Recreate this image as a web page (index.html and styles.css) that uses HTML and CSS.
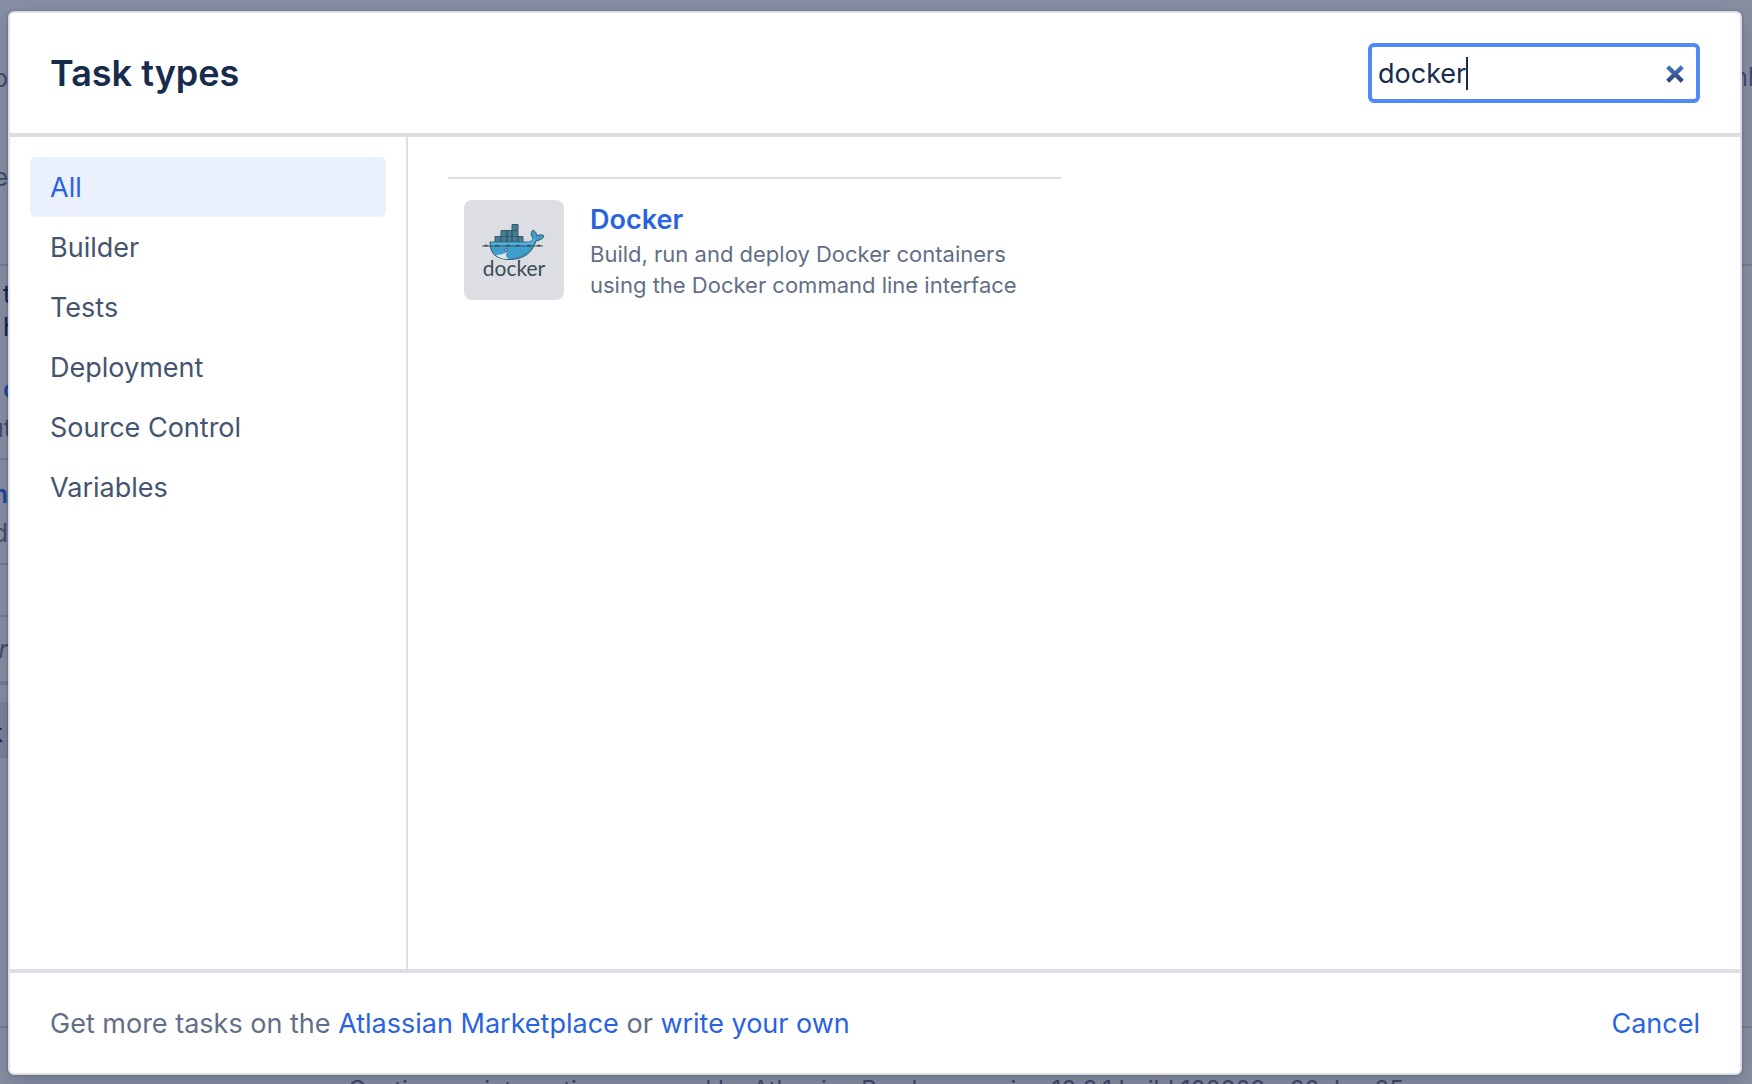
FILE: index.html
```html
<!DOCTYPE html>
<html lang="en">
<head>
<meta charset="utf-8">
<title>Task types</title>
<link rel="stylesheet" href="styles.css">
</head>
<body>
<div class="page">
  <div class="backdrop backdrop-left" aria-hidden="true">
    <span class="frag muted" style="top:62px">p</span>
    <span class="frag muted" style="top:161px">e</span>
    <span class="rule" style="top:264px"></span>
    <span class="frag dark" style="top:278px">t</span>
    <span class="frag dark" style="top:311px">h</span>
    <span class="frag blue" style="top:373px">c</span>
    <span class="frag muted cut" style="top:412px">ut</span>
    <span class="rule" style="top:458px"></span>
    <span class="frag blue-end" style="top:478px">an</span>
    <span class="frag muted" style="top:517px">d</span>
    <span class="rule" style="top:563px"></span>
    <span class="rule" style="top:615px"></span>
    <span class="frag muted italic" style="top:633px">r</span>
    <span class="rule thick" style="top:681px"></span>
    <span class="panel"></span>
    <span class="frag dark-end" style="top:717px">k</span>
    <span class="rule" style="top:1026px"></span>
  </div>
  <div class="backdrop backdrop-right" aria-hidden="true">
    <span class="frag muted edge" style="top:61px">nl</span>
    <span class="rule" style="top:264px"></span>
    <span class="rule" style="top:1026px"></span>
  </div>
  <p class="page-footer">Continuous integration powered by Atlassian Bamboo version 10.2.1 build 100209 - 20 Jan 25</p>

  <section class="dialog" role="dialog" aria-labelledby="dialog-title">
    <header class="dialog-header">
      <h1 class="dialog-title" id="dialog-title">Task types</h1>
      <div class="search">
        <input class="search-input" type="text" aria-label="Search tasks" value="docker" autofocus>
        <span class="caret"></span>
        <button class="search-clear" type="button" aria-label="Clear search">
          <svg width="20" height="20" viewBox="0 0 20 20"><defs><linearGradient id="clear-fill" gradientUnits="userSpaceOnUse" x1="0" y1="0" x2="0" y2="20"><stop offset="0" stop-color="#4c7fd0"/><stop offset="1" stop-color="#283a6b"/></linearGradient></defs><path d="M2.700 2.700L17.300 17.300M17.300 2.700L2.700 17.300" stroke="url(#clear-fill)" stroke-width="4.400"/></svg>
        </button>
      </div>
    </header>
    <div class="dialog-body">
      <nav class="categories" aria-label="Task categories">
        <a class="category selected" href="#all">All</a>
        <a class="category" href="#builder">Builder</a>
        <a class="category" href="#tests">Tests</a>
        <a class="category" href="#deployment">Deployment</a>
        <a class="category" href="#source">Source Control</a>
        <a class="category" href="#variables">Variables</a>
      </nav>
      <main class="results">
        <ul class="task-list">
          <li class="task">
            <div class="task-icon">
              <svg width="64" height="37" viewBox="0 0 64 37">
                <g fill="#3f8098" stroke="#3a5866" stroke-width="1">
                  <path d="M13 13.500h6v6h-6zM19 13.500h6v6h-6zM25 13.500h5v6h-5zM30 13.500h6v6h-6zM36 13.500h5v6h-5zM19 7.500h6v6h-6zM25 7.500h5v6h-5zM30 7.500h6v6h-6zM30 1.500h6v6h-6z"/>
                </g>
                <path d="M8 19H45C49 19 51 17 51 15C48 12 49 9 51 7C54 9 55 11 55 13C58 11 61 12 62 13C61 16 58 17 54 18C50 30 42 36.500 27 36.500C13 36 8 30 8 19Z" fill="#3f9dcb" stroke="#3a5866" stroke-width="1"/>
                <path d="M9 19.500H46C50 19 52 17 52 14L54 16C52 19 52 20 50 22H9Z" fill="#4fb1e2"/>
                <path d="M14 32C18 32 22 31 25 29C23 32 24 35 27 36C21 36 17 35 14 32Z" fill="#dce9ec"/>
                <path d="M29 35.500C40 34 47 29 51 23C46 34 38 36 29 35.500Z" fill="#3688b2"/>
                <circle cx="24" cy="27" r="1.400" fill="#dce9ec" stroke="#3a5866"/>
                <path d="M1 23L4 21.500L7 23L4 23.500ZM12 23L15 21.500L18 23L15 23.500ZM23 23L26 21.500L29 23L26 23.500ZM33 23L36 21.500L39 23L36 23.500ZM44 23L47 21.500L50 23L47 23.500ZM54 23L57 21.500L60 23L57 23.500Z" fill="#394d54"/>
                <path d="M0 23H61" stroke="#394d54" stroke-width=".8"/>
              </svg>
              <span class="logo-word">docker</span>
            </div>
            <div class="task-text">
              <h2 class="task-name"><a href="#docker">Docker</a></h2>
              <p class="task-desc">Build, run and deploy Docker containers using the Docker command line interface</p>
            </div>
          </li>
        </ul>
      </main>
    </div>
    <footer class="dialog-footer">
      <p class="more">Get more tasks on the <a href="#marketplace">Atlassian Marketplace</a> or <a href="#write">write your own</a></p>
      <button class="cancel" type="button">Cancel</button>
    </footer>
  </section>
</div>
</body>
</html>
```
FILE: styles.css
```css
* { box-sizing: border-box; }

body {
  margin: 0;
  font-family: Inter, "Liberation Sans", sans-serif;
  font-size: 27px;
  line-height: 40px;
  color: #172b4d;
}

h1, h2, p, ul { margin: 0; padding: 0; }

a { color: #2a63e0; text-decoration: none; }

.page {
  position: relative;
  height: 100vh;
  padding: 11px 10px 9px 8px;
  overflow: hidden;
  background: #898fa2;
}

/* Dimmed page showing round the dialog */
.backdrop {
  position: absolute;
  top: 0;
  bottom: 0;
  overflow: hidden;
  font-size: 25px;
  line-height: 32px;
}

.backdrop-left { left: 0; width: 8px; }
.backdrop-right { right: 0; width: 10px; }

.frag { position: absolute; right: 0; }
.muted { color: #424c6b; }
.cut { right: -4px; }
.edge { right: -2px; }
.dark { left: 3px; color: #14244f; }
.dark-end { right: 5px; color: #14244f; }
.blue { left: 3px; color: #1e479f; font-weight: 600; }
.blue-end { right: 0; color: #1e479f; font-weight: 600; }
.italic { font-style: italic; }
.rule { position: absolute; left: 0; width: 100%; height: 2px; background: #767e91; }
.thick { height: 4px; }
.panel { position: absolute; left: 0; top: 672px; width: 8px; height: 56px; background: #7c8195; top: 702px; }

.page-footer {
  position: absolute;
  top: 1076px;
  left: 0;
  right: 0;
  font-size: 24px;
  line-height: 28px;
  text-align: center;
  white-space: nowrap;
  color: #3e4866;
}

.dialog {
  position: relative;
  display: flex;
  flex-direction: column;
  height: 100%;
  border: 2px solid #dddee4;
  border-radius: 6px;
  background: #fff;
  box-shadow: 0 8px 20px rgba(9, 30, 66, .2), 0 0 2px rgba(9, 30, 66, .5);
}

.dialog-header {
  display: flex;
  align-items: center;
  justify-content: space-between;
  padding: 30px 40px;
  border-bottom: 4px solid #dddee4;
}

.dialog-title {
  font-size: 36px;
  line-height: 48px;
  font-weight: 600;
}

.search {
  position: relative;
  display: flex;
  width: 332px;
  height: 60px;
}

.search-input {
  width: 100%;
  padding: 2px 60px 0 6px;
  border: 4px solid #4f8af5;
  border-radius: 6px;
  outline: 0;
  background: #fff;
  font: inherit;
  color: #172b4d;
  caret-color: transparent;
}

.caret {
  position: absolute;
  top: 14px;
  left: 98px;
  width: 2px;
  height: 33px;
  background: #172b4d;
}

.search-clear {
  position: absolute;
  top: 21px;
  right: 15px;
  display: flex;
  padding: 0;
  border: 0;
  background: none;
}

.dialog-body { display: flex; flex: 1; min-height: 0; }

.categories {
  display: flex;
  flex-direction: column;
  flex: 0 0 398px;
  padding: 20px;
  border-right: 2px solid #dddee4;
}

.category {
  padding: 11px 20px 9px;
  border-radius: 6px;
  color: #44546f;
}

.category.selected { background: #eaf1fd; color: #2a63e0; }

.results { flex: 1; padding: 40px; }

.task-list { width: 613px; list-style: none; }

.task {
  display: flex;
  gap: 26px;
  padding: 21px 16px;
  border-top: 2px solid #dddee4;
}

.task-icon {
  display: flex;
  flex-direction: column;
  align-items: center;
  flex: 0 0 100px;
  height: 100px;
  padding-top: 23px;
  border-radius: 8px;
  background: #dddee4;
}

.logo-word {
  font-family: Lato, sans-serif;
  font-size: 21px;
  line-height: 16px;
  color: #394d54;
}

.task-text { padding-top: 1px; }

.task-name { font-size: 27px; line-height: 38px; font-weight: 600; }

.task-desc { font-size: 22px; line-height: 31px; color: #626f86; }

.dialog-footer {
  display: flex;
  align-items: center;
  justify-content: space-between;
  padding: 31px 40px 29px;
  border-top: 4px solid #dddee4;
}

.more { color: #626f86; }

.cancel {
  padding: 0;
  border: 0;
  background: none;
  font: inherit;
  color: #2a63e0;
}
```
